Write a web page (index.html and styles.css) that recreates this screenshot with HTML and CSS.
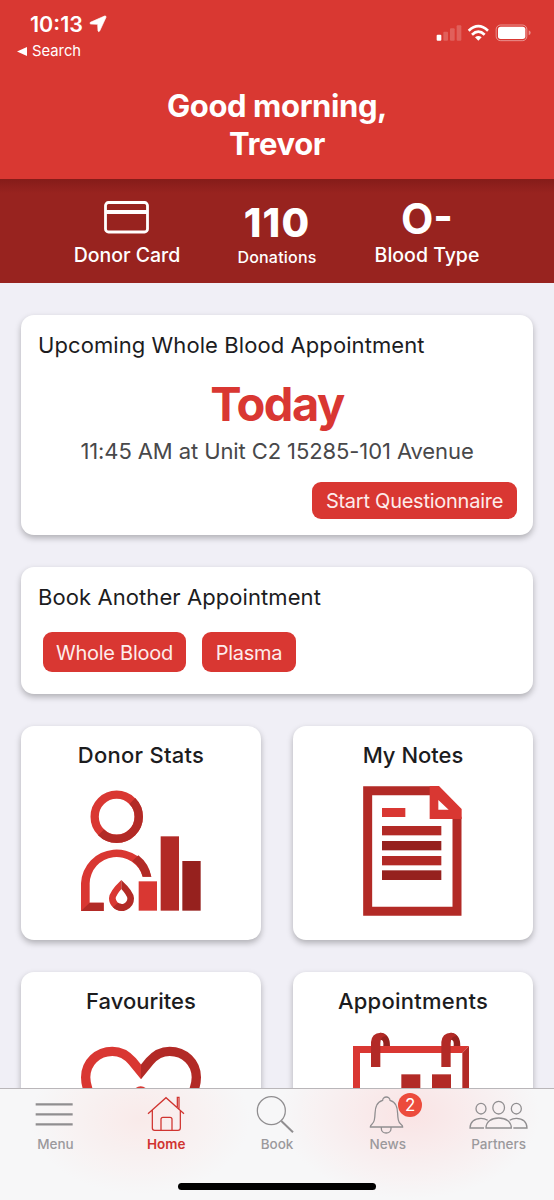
FILE: index.html
```
<!DOCTYPE html>
<html lang="en">

<head>
    <meta charset="utf-8">
    <title>Donor Home</title>

    <link rel="stylesheet" href="styles.css">
</head>

<body>
    <div class="app">
        <header class="header">
            <div class="status-bar">
                <div>
                    <div class="clock">
                        <span>10:13</span>
                        <svg width="18" height="18" viewBox="-1 -1 54 54">
                            <path d="M46 2L3 21Q0 25 4 26L25 27L26 47Q28 51 31 47L50 6Q51 1 46 2Z" fill="#fff" stroke="#fff" stroke-width="2" />
                        </svg>
                    </div>
                    <div class="back-link">
                        <svg width="10" height="9" viewBox="0 0 10 9">
                            <path d="M0 4.5L10 0V9Z" fill="#fff" />
                        </svg>
                        <span>Search</span>
                    </div>
                </div>
                <svg class="status-icons" width="97" height="20" viewBox="475 70 291 60">
                    <rect x="480" y="105" width="14" height="18" rx="3" fill="#fff" />
                    <g fill="#fff" opacity=".2">
                        <rect x="500" y="96" width="14" height="27" rx="3" />
                        <rect x="520" y="86" width="14" height="37" rx="3" />
                        <rect x="540" y="77" width="14" height="46" rx="3" />
                    </g>
                    <g fill="none" stroke="#fff" stroke-width="8">
                        <path d="M576 93Q605 66 634 93" />
                        <path d="M586 105Q605 87 624 105" />
                    </g>
                    <path d="M595 113Q605 105 615 113L605 123Z" fill="#fff" />
                    <rect x="658.5" y="76" width="92" height="47" rx="13" fill="none" stroke="#fff" stroke-width="3" opacity=".45" />
                    <rect x="664" y="81" width="82" height="37" rx="8" fill="#fff" />
                    <path d="M756 92Q762 94 762 99.5T756 107Z" fill="#fff" opacity=".45" />
                </svg>
            </div>
            <h1 class="greeting">Good morning,<br>Trevor</h1>
        </header>

        <section class="stats">
            <div class="stat">
                <svg class="stat-icon" width="46" height="34" viewBox="0 0 46 34">
                    <rect x="1.5" y="1.5" width="42" height="29.5" rx="3" fill="none" stroke="#fff" stroke-width="2.8" />
                    <path d="M1.5 11H43.5" stroke="#fff" stroke-width="4" />
                </svg>
                <div class="stat-label">Donor Card</div>
            </div>
            <div class="stat">
                <div class="stat-value value-count">110</div>
                <div class="stat-label label-small">Donations</div>
            </div>
            <div class="stat">
                <div class="stat-value value-type">O-</div>
                <div class="stat-label">Blood Type</div>
            </div>
        </section>

        <main class="content">
            <section class="card upcoming">
                <h2 class="card-title">Upcoming Whole Blood Appointment</h2>
                <div class="day">Today</div>
                <div class="place">11:45 AM at Unit C2 15285-101 Avenue</div>
                <button class="btn btn-start">Start Questionnaire</button>
            </section>

            <section class="card booking">
                <h2 class="card-title">Book Another Appointment</h2>
                <div class="btn-row">
                    <button class="btn btn-blood">Whole Blood</button>
                    <button class="btn btn-plasma">Plasma</button>
                </div>
            </section>

            <div class="tiles">
                <section class="card tile">
                    <h2 class="tile-title wide">Donor Stats</h2>
                    <svg width="130" height="130" viewBox="48 198 390 390">
                        <circle cx="170" cy="290" r="66" fill="none" stroke="#d93732" stroke-width="25" />
                        <path d="M217 243A66 66 0 0 1 123 337" fill="none" stroke="#b22a26" stroke-width="25" />
                        <path d="M63 573V490A107 106 0 0 1 274 470H248A81 81 0 0 0 89 490V548H131V573Z" fill="#d93732" />
                        <path d="M235 406A107 106 0 0 1 274 470H248A81 81 0 0 0 217 423Z" fill="#b22a26" />
                        <path d="M63 573L89 548H131V573Z" fill="#b22a26" />
                        <path d="M184 480Q147 515 147 535A37 37 0 0 0 184 572L184 551A17 17 0 0 1 167 535Q168 526 184 507Z" fill="#d93732" />
                        <path d="M184 480Q222 515 222 535A37 37 0 0 1 159 562L174 548A17 17 0 0 0 202 535Q201 526 184 507Z" fill="#b22a26" />
                        <rect x="236" y="484" width="55" height="88" fill="#d93732" />
                        <rect x="302" y="349" width="55" height="223" fill="#b22a26" />
                        <rect x="367" y="423" width="55" height="149" fill="#96211e" />
                    </svg>
                </section>
                <section class="card tile">
                    <h2 class="tile-title">My Notes</h2>
                    <svg width="130" height="130" viewBox="189 198 390 390">
                        <path d="M440 212H248V574H516V290" fill="none" stroke="#b22a26" stroke-width="27" />
                        <path d="M434 198H462L530 267V297H434ZM460 240V269H491Z" fill="#d93732" fill-rule="evenodd" />
                        <rect x="291" y="264" width="70" height="27" fill="#d93732" />
                        <rect x="291" y="318" width="178" height="28" fill="#b22a26" />
                        <rect x="291" y="363" width="178" height="28" fill="#96211e" />
                        <rect x="291" y="408" width="178" height="28" fill="#b22a26" />
                        <rect x="291" y="451" width="178" height="29" fill="#96211e" />
                    </svg>
                </section>
                <section class="card tile">
                    <h2 class="tile-title">Favourites</h2>
                    <svg width="130" height="130" viewBox="228 216 390 390">
                        <clipPath id="heartLeft">
                            <rect x="228" y="216" width="195" height="390" />
                        </clipPath>
                        <clipPath id="heartRight">
                            <rect x="423" y="216" width="195" height="390" />
                        </clipPath>
                        <g fill="none" stroke-width="28">
                            <path clip-path="url(#heartLeft)" stroke="#d93732" d="M440 356L397 304Q372 274 337 274C292 274 257 308 257 352C257 430 350 500 440 590" />
                            <path clip-path="url(#heartRight)" stroke="#b22a26" d="M406 356L449 304Q474 274 509 274C554 274 589 308 589 352C589 430 496 500 406 590" />
                        </g>
                        <circle cx="422" cy="403" r="24" fill="#d93732" />
                    </svg>
                </section>
                <section class="card tile">
                    <h2 class="tile-title wide">Appointments</h2>
                    <svg width="130" height="130" viewBox="213 216 390 390">
                        <path d="M228 258H576L556 279H249V560H228Z" fill="#d93732" />
                        <path d="M576 258V560H556V279Z" fill="#b22a26" />
                        <g id="ring">
                            <path d="M310 218Q339 220 339 258H319Q321 238 310 239Z" fill="#96211e" />
                            <path d="M282 321V246Q284 219 311 218Q324 220 328 228Q310 228 310 250V321Z" fill="#b22a26" />
                        </g>
                        <use href="#ring" x="211" />
                        <rect x="373" y="343" width="57" height="57" fill="#b22a26" />
                        <rect x="465" y="343" width="57" height="57" fill="#b22a26" />
                    </svg>
                </section>
            </div>
        </main>

        <nav class="tab-bar">
            <div class="tabs">
                <a class="tab">
                    <svg width="60" height="42" viewBox="76 405 180 126">
                        <path d="M108 433H219M108 463H219M108 493H219" stroke-width="7" />
                    </svg>
                    <span>Menu</span>
                </a>
                <a class="tab active">
                    <svg width="60" height="42" viewBox="409 405 180 126">
                        <path d="M445 461L499 413L553 461M458 451V504Q458 511 465 511H535Q542 511 542 504V451M484 511V478Q484 472 490 472H511Q517 472 517 478V511M533 441V412H538V446" />
                    </svg>
                    <span>Home</span>
                </a>
                <a class="tab">
                    <svg width="60" height="42" viewBox="743 403 180 126">
                        <circle cx="816" cy="450" r="42" />
                        <path d="M846 481L881 515" stroke-width="6" />
                    </svg>
                    <span>Book</span>
                </a>
                <a class="tab">
                    <svg width="60" height="42" viewBox="244 403 180 126">
                        <path d="M281 499C280 492 291 491 293 478C297 458 293 448 300 434C304 425 311 421 318 419A11 10 0 0 1 340 419C347 421 354 425 358 434C365 448 361 458 365 478C367 491 379 492 378 499ZM314 500V504A14.5 13 0 0 0 343 504V500" />
                    </svg>
                    <span>News</span>
                    <b class="badge">2</b>
                </a>
                <a class="tab">
                    <svg width="60" height="42" viewBox="575 404 180 126">
                        <ellipse cx="611" cy="445" rx="15" ry="16" />
                        <ellipse cx="717" cy="445" rx="15" ry="16" />
                        <ellipse cx="664" cy="442" rx="17.5" ry="19" />
                        <path d="M626 503C626 485 641 473 664 473S702 485 702 503ZM620 503H578C578 486 591 474 611 474Q622 474 631 480M708 503H749C749 486 737 474 717 474Q706 474 697 480" />
                    </svg>
                    <span>Partners</span>
                </a>
            </div>
            <div class="home-indicator"></div>
        </nav>
    </div>
</body>

</html>
```

FILE: styles.css
```
* {
    box-sizing: border-box;
}

body {
    margin: 0;
    font-family: Inter, "Liberation Sans", sans-serif;
    color: #1c1c1e;
    background: #f0eff6;
}

h1,
h2 {
    margin: 0;
}

svg {
    display: block;
}

.app {
    display: flex;
    flex-direction: column;
    height: 1200px;
    overflow: hidden;
}

/* Header */
.header {
    height: 179px;
    background: #d93832;
    color: #fff;
}

.status-bar {
    display: flex;
    justify-content: space-between;
    height: 87px;
    padding: 10px 22px 0 17px;
}

.clock {
    display: flex;
    align-items: center;
    gap: 6px;
    height: 28px;
    padding-left: 13px;
    font-size: 21.5px;
    font-weight: 600;
}

.back-link {
    display: flex;
    align-items: center;
    gap: 5px;
    height: 26px;
    font-size: 14.8px;
}

.status-icons {
    margin-top: 13px;
}

.greeting {
    text-align: center;
    font-size: 31px;
    line-height: 38px;
    font-weight: 700;
    letter-spacing: -0.4px;
}

/* Donor numbers */
.stats {
    display: flex;
    justify-content: center;
    height: 104px;
    padding-top: 14px;
    background: linear-gradient(#851c19, #98231f 14px);
    color: #fff;
    text-align: center;
}

.stat {
    width: 150px;
    white-space: nowrap;
}

.stat-icon {
    height: 50px;
    padding: 8px 0;
    margin: 0 auto;
}

.stat-value {
    height: 50px;
    font-weight: 700;
    line-height: 52px;
}

.value-count {
    padding-top: 4px;
    font-size: 40px;
    font-weight: 800;
    letter-spacing: 1.2px;
}

.value-type {
    font-size: 42px;
}

.stat-label {
    font-size: 19.5px;
    font-weight: 500;
    line-height: 24px;
}

.label-small {
    font-size: 16px;
    line-height: 28px;
    letter-spacing: 0.2px;
}

/* Cards */
.content {
    flex: 1;
    min-height: 0;
    overflow: hidden;
    padding: 32px 21px 0;
}

.card {
    margin-bottom: 32px;
    background: #fff;
    border-radius: 13px;
    box-shadow: 0 3px 6px rgba(0, 0, 0, 0.27);
}

.upcoming {
    display: flex;
    flex-direction: column;
    height: 220px;
    padding: 15px 17px 0;
}

.card-title {
    font-size: 22px;
    line-height: 30px;
    font-weight: 400;
    letter-spacing: 0.08px;
    white-space: nowrap;
}

.day {
    margin-top: 14px;
    text-align: center;
    color: #d93732;
    font-size: 47px;
    line-height: 60px;
    font-weight: 700;
    letter-spacing: -1.5px;
}

.place {
    text-align: center;
    color: #48484a;
    font-size: 22px;
    line-height: 34px;
    font-weight: 400;
    letter-spacing: -0.1px;
    white-space: nowrap;
}

.btn {
    border: 0;
    padding: 0;
    border-radius: 9px;
    background: #d93732;
    color: #fdeceb;
    font-family: inherit;
    font-size: 20px;
    letter-spacing: -0.25px;
    white-space: nowrap;
}

.btn-start {
    align-self: flex-end;
    width: 205px;
    height: 37px;
    margin-top: 14px;
    margin-right: -1px;
}

.booking {
    height: 127px;
    padding: 15px 17px 0;
}

.btn-row {
    display: flex;
    gap: 16px;
    padding: 20px 5px 0;
}

.btn-row .btn {
    height: 40px;
    padding-top: 1px;
}

.btn-blood {
    width: 143px;
}

.btn-plasma {
    width: 94px;
}

.tiles {
    display: grid;
    grid-template-columns: 240px 240px;
    gap: 32px;
}

.tile {
    display: flex;
    flex-direction: column;
    align-items: center;
    height: 214px;
    margin: 0;
    padding-top: 14px;
}

.tile-title {
    height: 46px;
    font-size: 22px;
    line-height: 30px;
    font-weight: 500;
}

.wide {
    letter-spacing: 0.25px;
}

/* Tab bar */
.tab-bar {
    height: 112px;
    border-top: 1px solid #b9b6b9;
    background:
        radial-gradient(ellipse 110px 75px at 140px 30px, rgba(255, 205, 200, 0.3), transparent),
        radial-gradient(ellipse 130px 85px at 410px 25px, rgba(255, 195, 195, 0.38), transparent),
        #f7f7f8;
}

.tabs {
    display: grid;
    grid-template-columns: repeat(5, 1fr);
    height: 94px;
    padding-top: 6px;
}

.tab {
    position: relative;
    display: flex;
    flex-direction: column;
    align-items: center;
    color: #9b999c;
    font-size: 13.5px;
    line-height: 14px;
    font-weight: 500;
}

.tab svg {
    fill: none;
    stroke: #908e90;
    stroke-width: 3.8;
}

.tab.active {
    color: #d03430;
    font-weight: 600;
}

.tab.active svg {
    stroke: #d03430;
}

.badge {
    position: absolute;
    top: -2px;
    left: calc(50% + 10.5px);
    width: 24px;
    height: 24px;
    border-radius: 50%;
    background: #ec4b3c;
    color: #fff;
    font-size: 17px;
    line-height: 24px;
    font-weight: 400;
    text-align: center;
}

.home-indicator {
    width: 198px;
    height: 7px;
    margin: 0 auto;
    border-radius: 4px;
    background: #000;
}
```
